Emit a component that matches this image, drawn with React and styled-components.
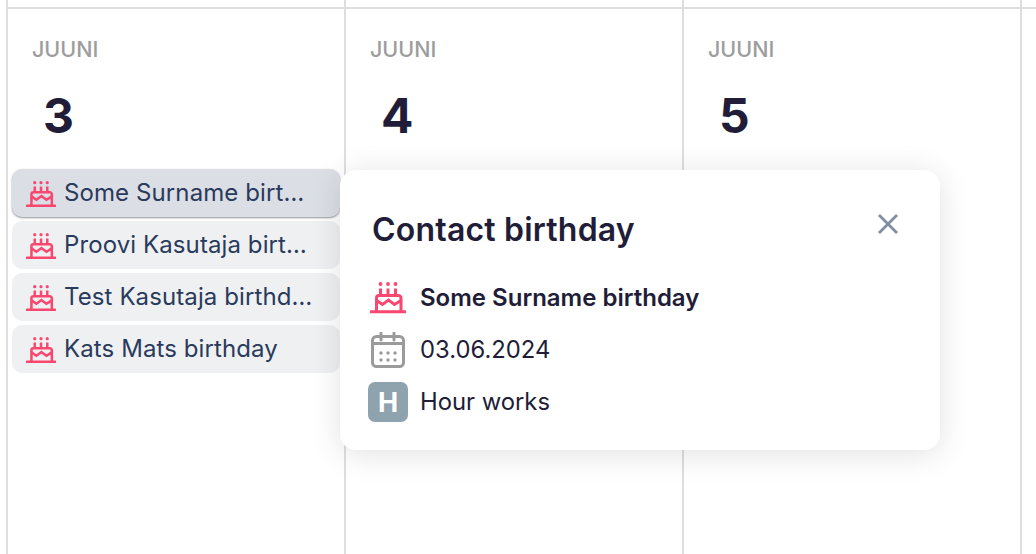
import React from "react"
import styled, { createGlobalStyle } from "styled-components"

const days = [
  { id: 3, events: ["Some Surname birthday", "Proovi Kasutaja birthday", "Test Kasutaja birthday", "Kats Mats birthday"] },
  { id: 4, events: [] },
  { id: 5, events: [] },
  { id: 6, hidden: true, events: [] },
]

const CakeIcon = ({ size = 30 }) => (
  <svg width={size} height={size * 0.889} viewBox="0 0 36 32" fill="none" stroke="#f9476f" strokeWidth="3">
    <path d="M1 29.8H35" strokeLinecap="round" />
    <path d="M6.5 29V16a2.5 2.5 0 0 1 2.5-2.5H28.5a2.5 2.5 0 0 1 2.5 2.5V29" />
    <path d="M6.5 18.5l6 4 6-4.5 6 4.5 6.5-4" />
    <path d="M10.5 6.5V13M18 6.5V13M25.5 6.5V13" />
    <g fill="#f9476f" stroke="none">
      <circle cx="10.5" cy="2" r="1.9" />
      <circle cx="18" cy="2" r="1.9" />
      <circle cx="25.5" cy="2" r="1.9" />
    </g>
  </svg>
)

const CalendarIcon = () => (
  <svg width="34" height="36" viewBox="0 0 34 36" fill="none" stroke="#9b9b9b" strokeWidth="3">
    <rect x="1.5" y="4.5" width="31" height="30" rx="4" />
    <path d="M1.5 11.5H32.5" />
    <path d="M10 1V8M23 1V8" strokeLinecap="round" />
    <g fill="#9b9b9b" stroke="none">
      <circle cx="10" cy="21" r="1.7" />
      <circle cx="17" cy="21" r="1.7" />
      <circle cx="24" cy="21" r="1.7" />
      <circle cx="10" cy="28" r="1.7" />
      <circle cx="17" cy="28" r="1.7" />
      <circle cx="24" cy="28" r="1.7" />
    </g>
  </svg>
)

const CloseIcon = () => (
  <svg width="20" height="20" viewBox="0 0 20 20" fill="none" stroke="#818da1" strokeWidth="2.8">
    <path d="M1 1L19 19M19 1L1 19" />
  </svg>
)

export default function App() {
  return (
    <>
      <GlobalStyle />
      <Board>
        {days.map((day) => (
          <Column key={day.id}>
            <DayCell>
              {!day.hidden && (
                <>
                  <Month>JUUNI</Month>
                  <DayNumber>{day.id}</DayNumber>
                </>
              )}
              <EventList>
                {day.events.map((name, i) => (
                  <EventRow key={name} $active={i === 0}>
                    <RowIcon>
                      <CakeIcon />
                    </RowIcon>
                    <EventName>{name}</EventName>
                  </EventRow>
                ))}
              </EventList>
            </DayCell>
          </Column>
        ))}
        <Popover>
          <PopoverHead>
            <PopoverTitle>Contact birthday</PopoverTitle>
            <CloseButton>
              <CloseIcon />
            </CloseButton>
          </PopoverHead>
          <InfoRow>
            <IconSlot>
              <CakeIcon size={36} />
            </IconSlot>
            <InfoName>Some Surname birthday</InfoName>
          </InfoRow>
          <InfoRow>
            <IconSlot>
              <CalendarIcon />
            </IconSlot>
            <InfoText>03.06.2024</InfoText>
          </InfoRow>
          <InfoRow>
            <IconSlot>
              <Badge>H</Badge>
            </IconSlot>
            <InfoText>Hour works</InfoText>
          </InfoRow>
        </Popover>
      </Board>
    </>
  )
}

const GlobalStyle = createGlobalStyle`
  html, body {
    margin: 0;
    height: 100%;
    overflow: hidden;
    background: #fff;
    font-family: Inter, "Liberation Sans", sans-serif;
  }
`

const Board = styled.div`
  position: relative;
  display: flex;
  height: 554px;
  padding-left: 6px;
  overflow: hidden;
`

const Column = styled.div`
  flex: 0 0 338px;
  padding-top: 7px;
  border-left: 2px solid #dedede;
  box-sizing: border-box;
`

const DayCell = styled.div`
  height: 100%;
  padding: 28px 0 0;
  border-top: 2px solid #dedede;
  box-sizing: border-box;
`

const Month = styled.div`
  margin-left: 24px;
  font-size: 21.5px;
  line-height: 24px;
  font-weight: 500;
  color: #9d9d9d;
`

const DayNumber = styled.div`
  margin: 27px 0 0 35px;
  height: 81px;
  font-size: 48px;
  line-height: 56px;
  font-weight: 700;
  color: #211d38;
`

const EventList = styled.div`
  display: flex;
  flex-direction: column;
  gap: 4px;
  margin-left: 4px;
`

const EventRow = styled.div`
  display: flex;
  align-items: center;
  gap: 8px;
  width: 328px;
  height: 48px;
  padding: 0 26px 0 14px;
  box-sizing: border-box;
  border-radius: 10px;
  background: ${(p) => (p.$active ? "#dcdee5" : "#eef0f2")};
  box-shadow: ${(p) => (p.$active ? "0 1px 2px rgba(40, 40, 60, 0.5)" : "none")};
`

const RowIcon = styled.span`
  display: flex;
  padding-top: 2px;
`

const EventName = styled.span`
  flex: 1;
  min-width: 0;
  overflow: hidden;
  white-space: nowrap;
  text-overflow: ellipsis;
  font-size: 24px;
  line-height: 46px;
  letter-spacing: 0.1px;
  color: #2a3a5c;
`

const Popover = styled.div`
  position: absolute;
  left: 340px;
  top: 170px;
  width: 600px;
  height: 280px;
  padding: 36px 28px 0;
  box-sizing: border-box;
  border-radius: 16px;
  background: #fff;
  box-shadow: 0 4px 32px rgba(0, 0, 0, 0.12);
`

const PopoverHead = styled.div`
  display: flex;
  align-items: center;
  justify-content: space-between;
  height: 48px;
  margin-bottom: 18px;
  padding-left: 4px;
`

const PopoverTitle = styled.h2`
  margin: 0;
  font-size: 32px;
  line-height: 48px;
  font-weight: 600;
  letter-spacing: 0.2px;
  color: #211d38;
`

const CloseButton = styled.div`
  display: flex;
  margin: 0 14px 12px 0;
`

const InfoRow = styled.div`
  display: flex;
  align-items: center;
  gap: 12px;
  height: 52px;
`

const IconSlot = styled.div`
  display: flex;
  justify-content: center;
  width: 40px;
`

const InfoName = styled.span`
  font-size: 24px;
  line-height: 50px;
  font-weight: 600;
  color: #211d38;
`

const InfoText = styled.span`
  font-size: 23.8px;
  line-height: 50px;
  color: #211d38;
`

const Badge = styled.div`
  display: flex;
  align-items: center;
  justify-content: center;
  width: 40px;
  height: 40px;
  border-radius: 7px;
  background: #8fa3ae;
  color: #fff;
  font-size: 27px;
  font-weight: 700;
`
